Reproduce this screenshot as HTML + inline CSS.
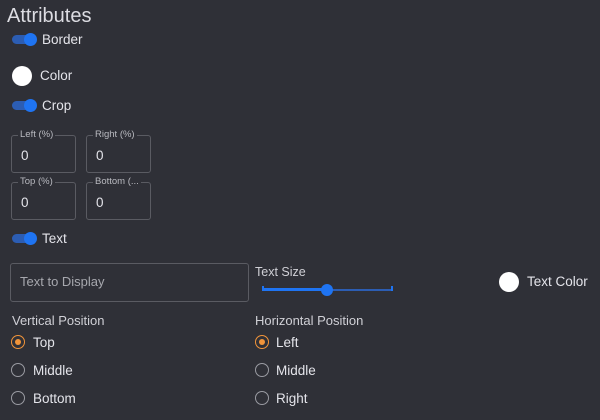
<!DOCTYPE html>
<html><head><style>
body{margin:0;width:600px;height:420px;background:#2f3037;font-family:"Liberation Sans",sans-serif;color:#e4e4ea;position:relative;overflow:hidden}
.a{position:absolute;white-space:nowrap}
.t{font-size:13.5px;line-height:16px}
.tg{position:absolute;width:22px;height:9px;border-radius:5px;background:#2c5db3}
.tg:after{content:"";position:absolute;right:-3px;top:-2.5px;width:13px;height:13px;border-radius:50%;background:#1f74f2}
.box{position:absolute;border:1px solid #5a5b62;border-radius:3px}
.lab{position:absolute;font-size:9.5px;color:#b9bac0;background:#2f3037;padding:0 2px;top:-7px;left:6px;line-height:12px}
.val{position:absolute;left:9px;top:12px;font-size:13.5px}
.r{position:absolute;width:12px;height:12px;border:1.5px solid #9a9ba2;border-radius:50%}
.r.on{border-color:#f1943a}
.r.on:after{content:"";position:absolute;left:3px;top:3px;width:6px;height:6px;border-radius:50%;background:#f1943a}
</style></head><body>
<div class="a" style="left:7px;top:5px;font-size:20px;color:#dcdce2">Attributes</div>
<div class="tg" style="left:12px;top:35px"></div><div class="a t" style="left:42px;top:32px">Border</div>
<div class="a" style="left:12px;top:66px;width:20px;height:20px;border-radius:50%;background:#fff"></div><div class="a t" style="left:40px;top:68px">Color</div>
<div class="tg" style="left:12px;top:101px"></div><div class="a t" style="left:42px;top:98px">Crop</div>
<div class="box" style="left:11px;top:135px;width:63px;height:36px"><span class="lab">Left (%)</span><span class="val">0</span></div>
<div class="box" style="left:86px;top:135px;width:63px;height:36px"><span class="lab">Right (%)</span><span class="val">0</span></div>
<div class="box" style="left:11px;top:182px;width:63px;height:36px"><span class="lab">Top (%)</span><span class="val">0</span></div>
<div class="box" style="left:86px;top:182px;width:63px;height:36px"><span class="lab">Bottom (...</span><span class="val">0</span></div>
<div class="tg" style="left:12px;top:234px"></div><div class="a t" style="left:42px;top:231px">Text</div>
<div class="box" style="left:10px;top:263px;width:237px;height:37px"><span class="val" style="top:10px;color:#a7a8ae;font-size:13px">Text to Display</span></div>
<div class="a" style="left:255px;top:265px;font-size:12.5px;color:#d0d0d6">Text Size</div>
<div class="a" style="left:262px;top:289px;width:130px;height:2px;background:#2c5db3"></div>
<div class="a" style="left:262px;top:288px;width:65px;height:3px;background:#1f74f2"></div>
<div class="a" style="left:262px;top:286px;width:2px;height:5px;background:#1f74f2"></div>
<div class="a" style="left:391px;top:286px;width:2px;height:5px;background:#1f74f2"></div>
<div class="a" style="left:321px;top:284px;width:12px;height:12px;border-radius:50%;background:#1f74f2"></div>
<div class="a" style="left:499px;top:272px;width:20px;height:20px;border-radius:50%;background:#fff"></div>
<div class="a t" style="left:527px;top:274px">Text Color</div>
<div class="a" style="left:12px;top:313px;font-size:13px;color:#d0d0d6">Vertical Position</div>
<div class="r on" style="left:11px;top:335px"></div><div class="a t" style="left:33px;top:335px">Top</div>
<div class="r" style="left:11px;top:363px"></div><div class="a t" style="left:33px;top:363px">Middle</div>
<div class="r" style="left:11px;top:391px"></div><div class="a t" style="left:33px;top:391px">Bottom</div>
<div class="a" style="left:255px;top:313px;font-size:13px;color:#d0d0d6">Horizontal Position</div>
<div class="r on" style="left:255px;top:335px"></div><div class="a t" style="left:276px;top:335px">Left</div>
<div class="r" style="left:255px;top:363px"></div><div class="a t" style="left:276px;top:363px">Middle</div>
<div class="r" style="left:255px;top:391px"></div><div class="a t" style="left:276px;top:391px">Right</div>
</body></html>
